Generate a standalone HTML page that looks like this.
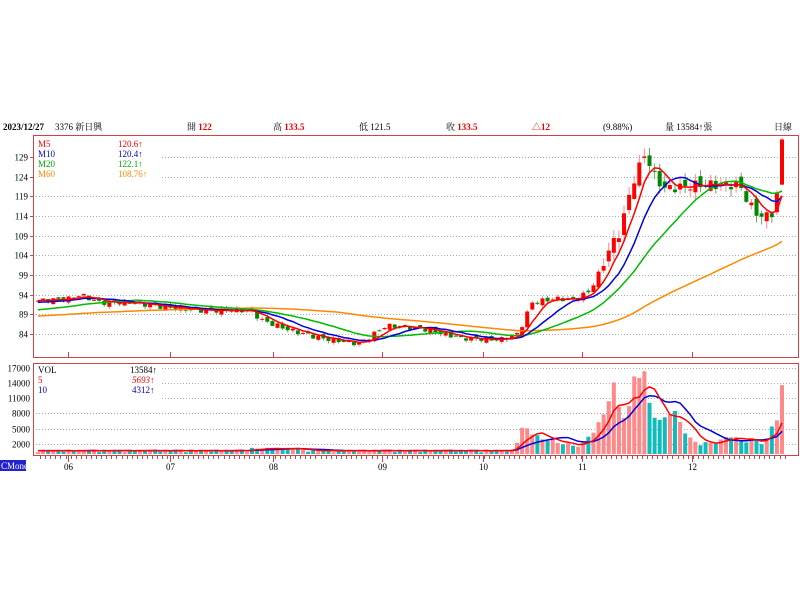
<!DOCTYPE html>
<html><head><meta charset="utf-8"><style>
html,body{margin:0;padding:0;background:#fff;width:800px;height:600px;overflow:hidden}
svg{display:block}
text{font-family:"Liberation Serif","Noto Serif CJK SC",serif;font-size:9px}
</style></head><body>
<svg id="s" width="800" height="600" xmlns="http://www.w3.org/2000/svg">
<rect x="0" y="119" width="800" height="356" fill="#fff"/>
<g id="hdr">
<text x="3" y="130" font-weight="bold" fill="#000">2023/12/27</text>
<text x="55" y="130" fill="#000">3376 新日興</text>
<text x="187" y="130" fill="#000">開 <tspan fill="#e00" font-weight="bold">122</tspan></text>
<text x="273" y="130" fill="#000">高 <tspan fill="#e00" font-weight="bold">133.5</tspan></text>
<text x="359" y="130" fill="#000">低 121.5</text>
<text x="446" y="130" fill="#000">收 <tspan fill="#e00" font-weight="bold">133.5</tspan></text>
<text x="532" y="130" fill="#e00" font-weight="bold">△12</text>
<text x="603" y="130" fill="#000" font-size="8">(9.88%)</text>
<text x="665" y="130" fill="#000">量 13584↑張</text>
<text x="774" y="130" fill="#000">日線</text>
</g>
<rect x="33.5" y="135.5" width="765" height="222" fill="none" stroke="#c44" stroke-width="1"/>
<rect x="33.5" y="363.5" width="765" height="92" fill="none" stroke="#c44" stroke-width="1"/>
<g id="grid"></g>
<g id="plot"></g>
<rect x="36" y="138" width="126" height="44" fill="#fff"/>
<text x="38" y="147" fill="#e00">M5</text><text x="118" y="147" fill="#e00">120.6↑</text>
<text x="38" y="157" fill="#00c">M10</text><text x="118" y="157" fill="#00c">120.4↑</text>
<text x="38" y="167" fill="#0a0">M20</text><text x="118" y="167" fill="#0a0">122.1↑</text>
<text x="38" y="177" fill="#f80">M60</text><text x="118" y="177" fill="#f80">108.76↑</text>
<rect x="36" y="366" width="126" height="33" fill="#fff"/>
<text x="38" y="373" fill="#000">VOL</text><text x="130" y="373" fill="#000">13584↑</text>
<text x="38" y="383" fill="#e00">5</text><text x="132" y="383" fill="#e00" font-style="italic">5693↑</text>
<text x="38" y="393" fill="#00c">10</text><text x="132" y="393" fill="#00c">4312↑</text>
<rect x="0" y="460" width="26" height="11" fill="#22c"/>
<text x="1" y="469" fill="#fff" font-size="7.5">CMoney</text>
</svg>
<script>
var NS="http://www.w3.org/2000/svg";
function el(p,t,a){var e=document.createElementNS(NS,t);for(var k in a)e.setAttribute(k,a[k]);p.appendChild(e);return e;}
var G=document.getElementById('grid'),P=document.getElementById('plot');
function py(p){return 334-(p-84)*3.93;}
function vy(v){return 454-v*0.00507;}
[129,124,119,114,109,104,99,94,89,84].forEach(function(p){var y=Math.round(py(p))+.5;
 el(G,'line',{x1:36,x2:798,y1:y,y2:y,stroke:'#aaa','stroke-dasharray':'1,2'});
 el(G,'line',{x1:30,x2:34,y1:y,y2:y,stroke:'#c44'});
 var t=el(G,'text',{x:28,y:y+3,'text-anchor':'end',fill:'#000'});t.textContent=p;});
[17000,14000,11000,8000,5000,2000].forEach(function(v){var y=Math.round(vy(v))+.5;
 el(G,'line',{x1:36,x2:798,y1:y,y2:y,stroke:'#aaa','stroke-dasharray':'1,2'});
 var t=el(G,'text',{x:30,y:y+3,'text-anchor':'end',fill:'#000'});t.textContent=v;});
[['06',68],['07',170],['08',273],['09',382],['10',483],['11',582],['12',692]].forEach(function(m){
 el(G,'line',{x1:m[1]+.5,x2:m[1]+.5,y1:352,y2:358,stroke:'#c44'});
 el(G,'line',{x1:m[1]+.5,x2:m[1]+.5,y1:456,y2:462,stroke:'#c44'});
 var t=el(G,'text',{x:m[1]-4,y:470,fill:'#000'});t.textContent=m[0];});
for(var x=40;x<785;x+=5.1)el(G,'line',{x1:Math.round(x)+.5,x2:Math.round(x)+.5,y1:456,y2:459,stroke:'#c44'});
var kp=[[38,92.5],[70,93],[80,94],[100,92],[130,92],[160,91],[200,90],[250,90],[262,87.5],[290,85],[320,83],[360,81.5],[385,86],[400,86],[430,85],[460,83],[500,82.5],[518,84],[525,88],[532,92],[555,93],[575,92.8],[590,95],[600,100],[610,106],[620,110],[632,122],[645,130],[655,124],[665,121],[700,122],[740,122],[745,119],[752,116],[760,114],[770,114],[776,117],[782,133.5]];
function interp(x){for(var i=1;i<kp.length;i++)if(x<=kp[i][0]){var a=kp[i-1],b=kp[i];return a[1]+(b[1]-a[1])*(x-a[0])/(b[0]-a[0]);}return kp[kp.length-1][1];}
var N=147,xs=[],C=[],O=[],H=[],L=[],V=[];
for(var i=0;i<N;i++){var x=38+i*(744/(N-1));xs.push(x);
 var c=interp(x)+Math.sin(i*2.3)*0.6*(x>600?2:1);C.push(c);}
C[N-1]=133.5;
for(var i=0;i<N;i++){var prev=i?C[i-1]:C[0];var o=prev+Math.sin(i*1.7)*0.5*(xs[i]>600?2.5:1);if(i==N-1)o=122;O.push(o);
 H.push(Math.max(o,C[i])+Math.abs(Math.sin(i*3.1))*(xs[i]>600?2:0.6));L.push(Math.min(o,C[i])-Math.abs(Math.cos(i*2.7))*(xs[i]>600?2:0.6));
 var x=xs[i],v;
 if(x<515)v=350+Math.abs(Math.sin(i*1.3))*500+(x>250&&x<300?400:0);
 else{var vk=[[515,1500],[525,6000],[535,3500],[560,2200],[580,1500],[590,4000],[600,6000],[605,9000],[612,14000],[620,9000],[628,7000],[635,17000],[642,17000],[650,10000],[660,6000],[670,9000],[680,6500],[690,3000],[700,2000],[720,2500],[730,4000],[740,2500],[755,3000],[765,2000],[772,5500],[776,7000],[782,13584]];
  v=1500;for(var j=1;j<vk.length;j++)if(x<=vk[j][0]){var a=vk[j-1],b=vk[j];v=a[1]+(b[1]-a[1])*(x-a[0])/(b[0]-a[0]);break;}
  v*=0.75+0.35*Math.abs(Math.sin(i*2.1));if(i==N-1)v=13584;}
 V.push(v);}
function ma(arr,n,pad){var r=[];for(var i=0;i<arr.length;i++){var s=0;for(var k=0;k<n;k++){var j=i-k;s+=j>=0?arr[j]:pad;}r.push(s/n);}return r;}
for(var i=0;i<N;i++){var up=C[i]>=O[i],col=up?'#f00':'#080',x=xs[i];
 var vb=up?'#f88':'#1bb';var yv=vy(V[i]);el(P,'rect',{x:x-2,y:yv,width:4,height:454-yv,fill:vb});
 el(P,'line',{x1:x,x2:x,y1:py(H[i]),y2:py(L[i]),stroke:up?'#f88':'#6a6','stroke-width':1});
 var t=py(Math.max(O[i],C[i])),b=py(Math.min(O[i],C[i]));el(P,'rect',{x:x-2,y:t,width:4,height:Math.max(1,b-t),fill:col});}
function line(arr,col,f){var d='';for(var i=0;i<arr.length;i++)d+=(i?'L':'M')+xs[i].toFixed(1)+' '+f(arr[i]).toFixed(1);el(P,'path',{d:d,fill:'none',stroke:col,'stroke-width':1.5});}
line(ma(C,60,88.5),'#f80',py);line(ma(C,20,90),'#0b0',py);line(ma(C,10,92),'#00d',py);line(ma(C,5,92.5),'#f00',py);
line(ma(V,10,700),'#00d',vy);line(ma(V,5,700),'#f00',vy);
</script>
</body></html>
